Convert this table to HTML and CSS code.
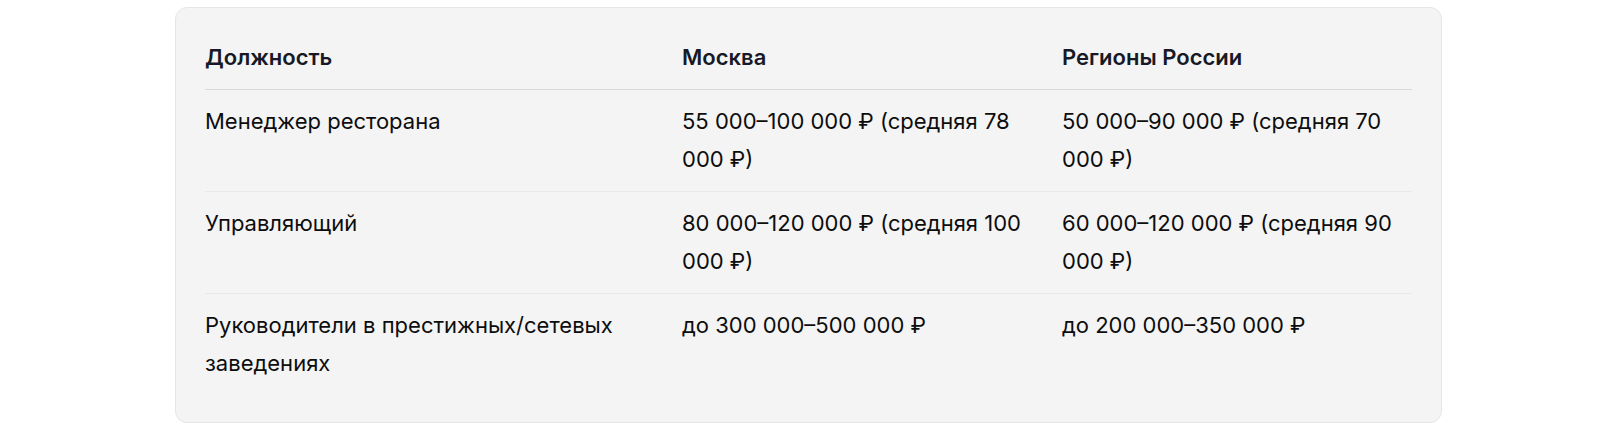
FILE: index.html
```html
<!DOCTYPE html>
<html lang="ru">
<head>
<meta charset="utf-8">
<title>Зарплаты</title>
<link rel="stylesheet" href="styles.css">
</head>
<body>
<div class="page">
  <div class="card">
    <table class="salary">
      <thead>
        <tr>
          <th class="c1">Должность</th>
          <th class="c2">Москва</th>
          <th class="c3">Регионы России</th>
        </tr>
      </thead>
      <tbody>
        <tr>
          <td>Менеджер ресторана</td>
          <td>55 000–100 000 ₽ (средняя 78 000 ₽)</td>
          <td>50 000–90 000 ₽ (средняя 70 000 ₽)</td>
        </tr>
        <tr>
          <td>Управляющий</td>
          <td>80 000–120 000 ₽ (средняя 100 000 ₽)</td>
          <td>60 000–120 000 ₽ (средняя 90 000 ₽)</td>
        </tr>
        <tr>
          <td>Руководители в престижных/сетевых заведениях</td>
          <td>до 300 000–500 000 ₽</td>
          <td>до 200 000–350 000 ₽</td>
        </tr>
      </tbody>
    </table>
  </div>
</div>
</body>
</html>
```

FILE: styles.css
```css
html, body {
  margin: 0;
  padding: 0;
  background: #ffffff;
}
body {
  font-family: Inter, "Noto Sans", "DejaVu Sans", sans-serif;
  color: #0d0d0d;
}
.page {
  padding: 7px 168px 7px 175px;
}
.card {
  background: #f4f4f4;
  border: 1px solid #e6e6e6;
  border-radius: 12px;
  padding: 30px 29px 27px 29px;
}
.salary {
  width: 100%;
  border-collapse: collapse;
  table-layout: fixed;
  font-size: 22px;
  line-height: 38px;
}
.salary th {
  text-align: left;
  font-weight: 600;
  color: #171a26;
  padding: 0 24px 13px 0;
  border-bottom: 1px solid #d9d9d9;
}
.salary td {
  vertical-align: top;
  padding: 12px 24px 13px 0;
  border-bottom: 1px solid #e8e8e8;
}
.salary th:last-child,
.salary td:last-child {
  padding-right: 0;
}
.salary tbody tr:last-child td {
  border-bottom: none;
}
.c1 { width: 453px; }
.c2 { width: 356px; }
.c3 { width: auto; }
```
